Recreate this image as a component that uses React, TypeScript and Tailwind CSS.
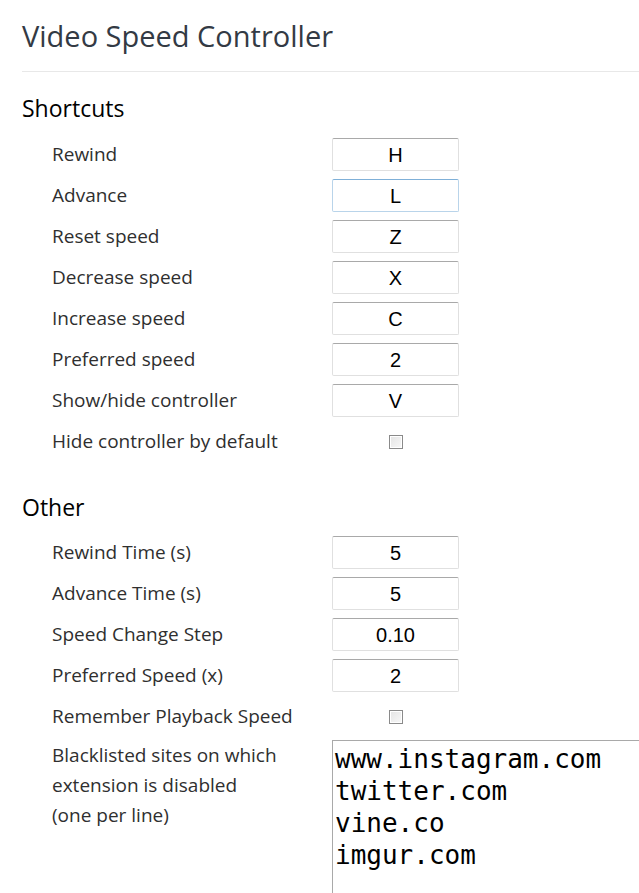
import React from "react";

const shortcuts = [
  { label: "Rewind", value: "H" },
  { label: "Advance", value: "L", focus: true },
  { label: "Reset speed", value: "Z" },
  { label: "Decrease speed", value: "X" },
  { label: "Increase speed", value: "C" },
  { label: "Preferred speed", value: "2" },
  { label: "Show/hide controller", value: "V" },
];

const other = [
  { label: "Rewind Time (s)", value: "5" },
  { label: "Advance Time (s)", value: "5" },
  { label: "Speed Change Step", value: "0.10" },
  { label: "Preferred Speed (x)", value: "2" },
];

function KeyInput({ value, focus }: { value: string; focus?: boolean }) {
  return (
    <div
      className={`w-[127px] h-[33px] rounded-[2px] border flex items-center justify-center bg-white text-[20px] text-black font-['Liberation_Sans',Arial,sans-serif] ${
        focus ? "border-[#b9d4ea] border-t-[#7fb0d8]" : "border-[#e0e0e0] border-t-[#a9a9a9]"
      }`}
    >
      {value}
    </div>
  );
}

function Check() {
  return (
    <div className="w-[127px] flex justify-center">
      <div className="w-[14px] h-[14px] border border-[#8a8a8a] bg-gradient-to-br from-[#e4e4e4] to-[#f8f8f8] shadow-[inset_0_0_0_1px_#fff]" />
    </div>
  );
}

function Row({ label, children }: { label: string; children: React.ReactNode }) {
  return (
    <div className="flex items-center h-[41px]">
      <div className="w-[310px] pl-[30px]">{label}</div>
      {children}
    </div>
  );
}

export default function App() {
  return (
    <div className="h-screen bg-white text-[#2f2f2f] font-['Open_Sans','Noto_Sans',sans-serif] text-[19px] pl-[22px] overflow-hidden">
      <h1 className="text-[29px] text-[#333a44] pt-[16px] pb-[15px] leading-[40px]">Video Speed Controller</h1>
      <div className="border-t border-[#e8e8e8]" />

      <h2 className="text-[23px] text-black mt-[21px] leading-[30px]">Shortcuts</h2>
      <div className="mt-[11px]">
        {shortcuts.map(s => (
          <Row key={s.label} label={s.label}>
            <KeyInput value={s.value} focus={s.focus} />
          </Row>
        ))}
        <Row label="Hide controller by default">
          <Check />
        </Row>
      </div>

      <h2 className="text-[23px] text-black mt-[30px] leading-[30px]">Other</h2>
      <div className="mt-[10px]">
        {other.map(s => (
          <Row key={s.label} label={s.label}>
            <KeyInput value={s.value} />
          </Row>
        ))}
        <Row label="Remember Playback Speed">
          <Check />
        </Row>
        <div className="flex mt-[3px]">
          <div className="w-[310px] pl-[30px] leading-[30px]">
            Blacklisted sites on which
            <br />
            extension is disabled
            <br />
            (one per line)
          </div>
          <div className="flex-1 h-[200px] border-l border-t border-[#a9a9a9] pl-[2px] pt-[2px] font-['DejaVu_Sans_Mono',monospace] text-[26px] leading-[32px] text-black whitespace-pre">
            {"www.instagram.com\ntwitter.com\nvine.co\nimgur.com"}
          </div>
        </div>
      </div>
    </div>
  );
}
